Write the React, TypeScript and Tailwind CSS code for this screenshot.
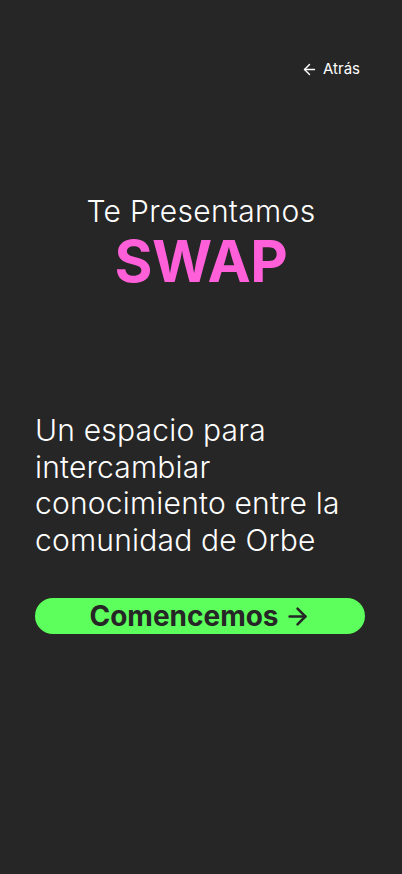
import { ArrowLeft, ArrowRight } from "lucide-react";

export default function App() {
  return (
    <div
      className="min-h-[874px] w-full bg-[#262626] text-white flex flex-col"
      style={{ fontFamily: "Inter, 'Noto Sans', sans-serif" }}
    >
      {/* Top bar */}
      <div className="flex justify-end pt-[59px] pr-[42px]">
        <button className="flex items-center gap-[5px] text-[15px] leading-[20px] text-white">
          <ArrowLeft size={17} strokeWidth={2} />
          Atrás
        </button>
      </div>

      {/* Title */}
      <div className="flex flex-col items-center mt-[114px]">
        <h2 className="text-[30px] leading-[36px] font-light tracking-[0.3px]">Te Presentamos</h2>
        <h1 className="mt-[2px] text-[58px] leading-[60px] font-bold text-[#ff5fd9] tracking-[-0.5px]">SWAP</h1>
      </div>

      {/* Body */}
      <div className="px-[35px] mt-[121px]">
        <p className="text-[30px] leading-[36.5px] font-light tracking-[0.2px]">
          Un espacio para intercambiar conocimiento entre la comunidad de Orbe
        </p>
        <button className="mt-[40px] w-[330px] h-[36px] rounded-full bg-[#5cff5c] text-[#262626] flex items-center justify-center gap-[5px]">
          <span className="text-[28px] font-bold leading-none">Comencemos</span>
          <ArrowRight size={27} strokeWidth={2.2} />
        </button>
      </div>
    </div>
  );
}
